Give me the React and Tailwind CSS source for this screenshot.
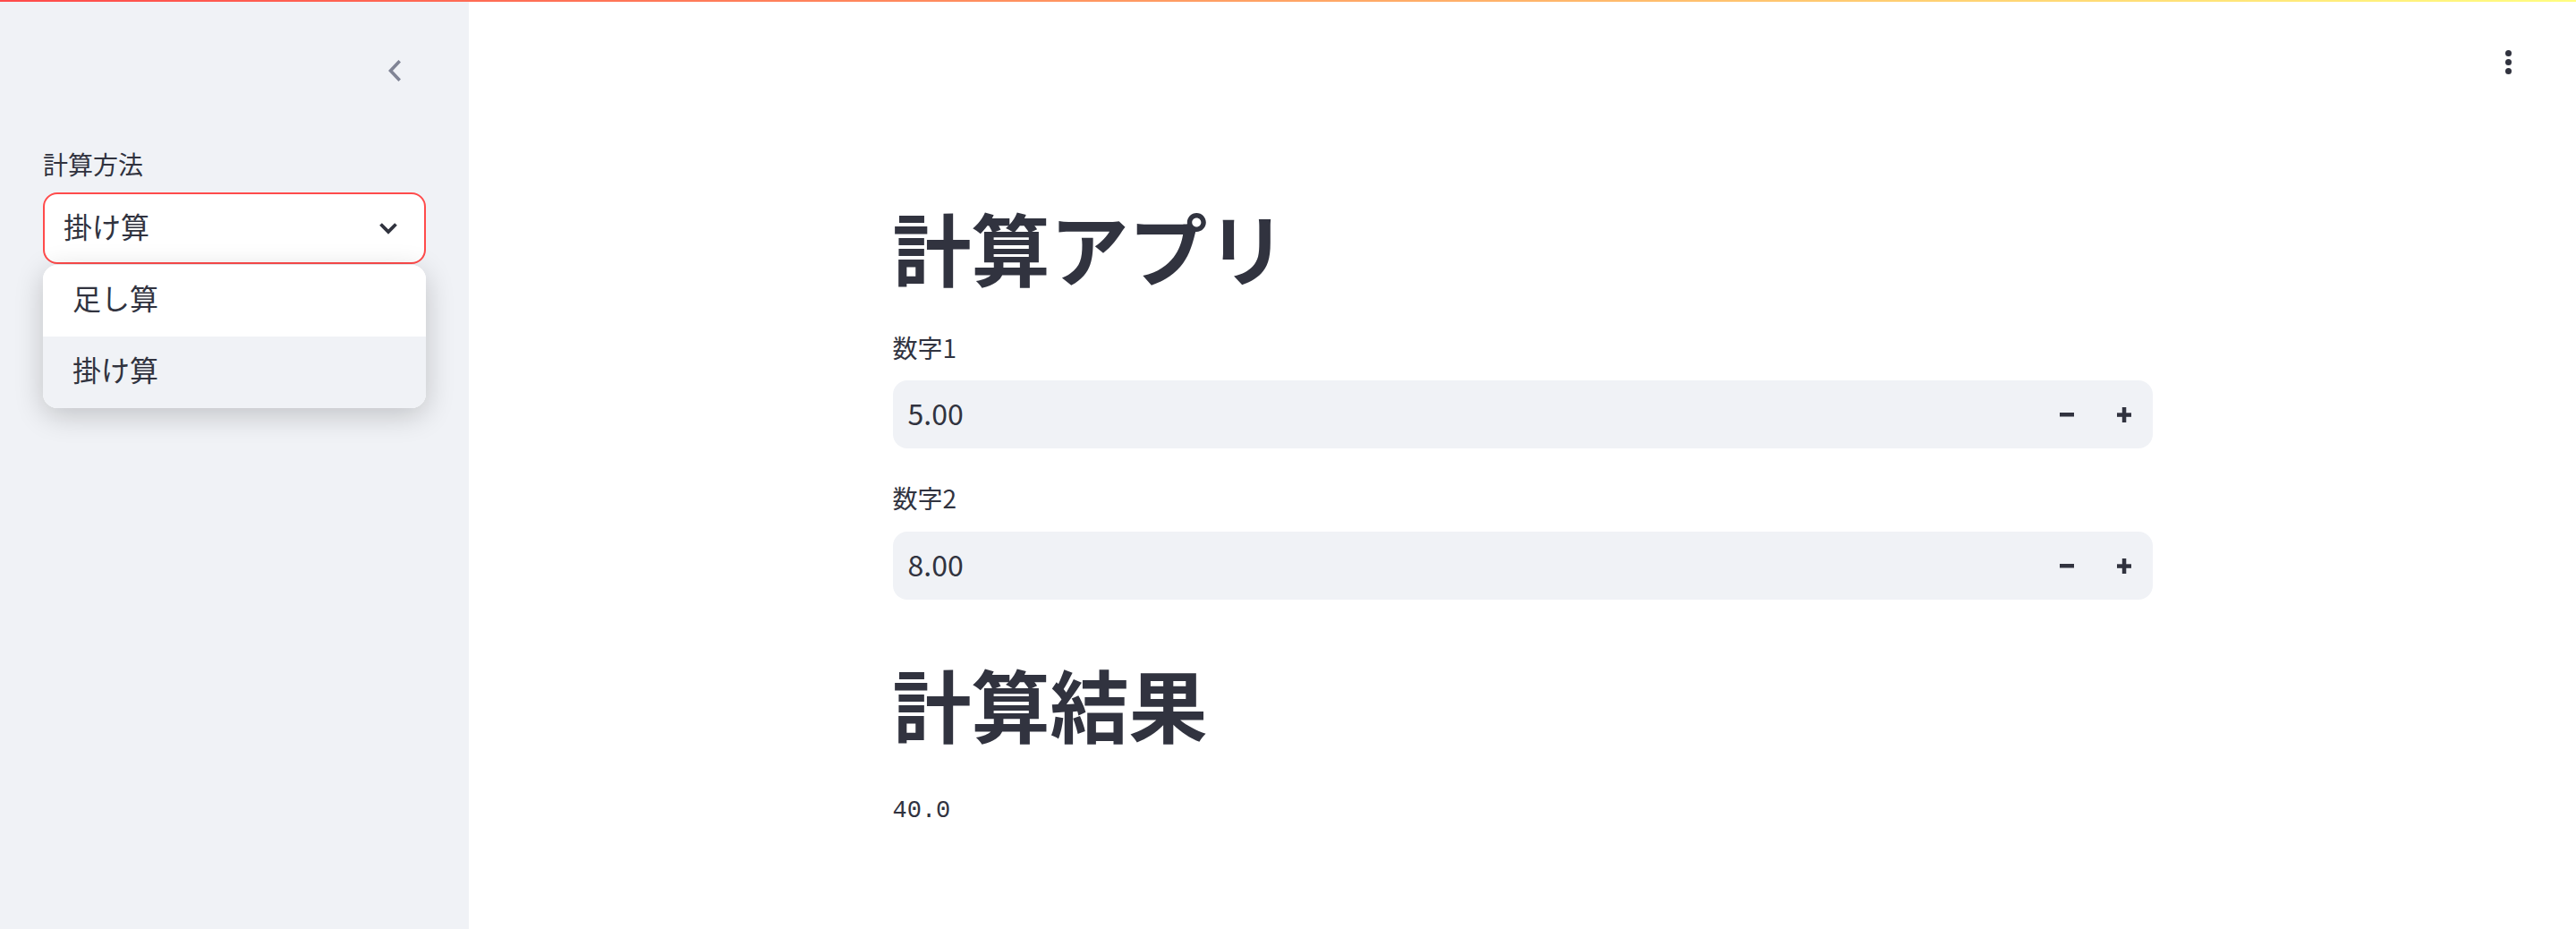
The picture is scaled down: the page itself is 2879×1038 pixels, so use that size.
import React from 'react';

const ChevronLeft = () => (
    <svg width="16" height="24" viewBox="0 0 16 24" fill="none">
        <path d="M13.5 2.5 L4.5 12 L13.5 21.5" stroke="#808495" strokeWidth="3.6" strokeLinecap="square" />
    </svg>
);

const ChevronDown = () => (
    <svg width="22" height="14" viewBox="0 0 22 14" fill="none">
        <path d="M2.5 2.5 L11 11 L19.5 2.5" stroke="#31333f" strokeWidth="3.8" />
    </svg>
);

const Minus = () => (
    <svg width="16" height="16" viewBox="0 0 16 16">
        <rect x="0" y="6" width="16" height="4.5" fill="#31333f" />
    </svg>
);

const Plus = () => (
    <svg width="16" height="17" viewBox="0 0 16 17">
        <rect x="0" y="6.3" width="16" height="4.5" fill="#31333f" />
        <rect x="5.8" y="0" width="4.5" height="17" fill="#31333f" />
    </svg>
);

const NumberInput = ({ label, value, top }) => (
    <div className={top}>
        <div className="text-[28px] leading-[44.8px]">{label}</div>
        <div className="mt-[15px] h-[76px] bg-[#f0f2f6] rounded-[16px] flex items-center">
            <div className="flex-1 pl-[17px] pb-[4px] text-[32px]">{value}</div>
            <button className="w-[64px] h-full flex items-center justify-center"><Minus /></button>
            <button className="w-[64px] h-full flex items-center justify-center"><Plus /></button>
        </div>
    </div>
);

export default function App() {
    const options = ['足し算', '掛け算'];

    return (
        <div className="relative h-screen flex text-[#31333f] font-['Noto_Sans_CJK_JP','Noto_Sans',sans-serif] overflow-hidden">
            {/* top decoration bar */}
            <div className="absolute top-0 left-0 right-0 h-[2px] z-20 bg-[linear-gradient(90deg,#ff4b4b,#fffd80)]"></div>

            {/* Sidebar */}
            <aside className="relative w-[524px] shrink-0 bg-[#f0f2f6] px-[48px]">
                <div className="flex justify-end pt-[67px] pr-[28px]">
                    <ChevronLeft />
                </div>
                <div className="mt-[70px] text-[28px] leading-[44.8px]">計算方法</div>
                <div className="mt-[9px] h-[80px] bg-white border-2 border-[#ff4b4b] rounded-[16px] flex items-center justify-between pl-[21px] pr-[29px] text-[32px]">
                    <span className="pb-[5px]">掛け算</span>
                    <ChevronDown />
                </div>

                {/* open dropdown menu */}
                <div className="absolute left-[48px] top-[296px] w-[428px] bg-white rounded-[16px] overflow-hidden shadow-[0_8px_32px_rgba(0,0,0,0.2)] z-10">
                    {options.map((opt, i) => (
                        <div
                            key={opt}
                            className={`h-[80px] flex items-center pl-[33px] pb-[8px] text-[32px] ${i === 1 ? 'bg-[#f0f2f6]' : 'bg-white'}`}
                        >
                            {opt}
                        </div>
                    ))}
                </div>
            </aside>

            {/* Main */}
            <main className="relative flex-1 bg-white">
                <div className="absolute top-[56px] right-[72px] flex flex-col gap-[3px] items-center">
                    <span className="w-[7px] h-[7px] rounded-full bg-[#31333f]"></span>
                    <span className="w-[7px] h-[7px] rounded-full bg-[#31333f]"></span>
                    <span className="w-[7px] h-[7px] rounded-full bg-[#31333f]"></span>
                </div>

                <div className="w-[1408px] mx-auto pt-[222px]">
                    <h1 className="text-[88px] font-bold leading-[1.2]">計算アプリ</h1>
                    <NumberInput label="数字1" value="5.00" top="mt-[38px]" />
                    <NumberInput label="数字2" value="8.00" top="mt-[33px]" />
                    <h2 className="mt-[62px] text-[88px] font-bold leading-[1.2]">計算結果</h2>
                    <div className="mt-[48px] font-['Liberation_Mono',monospace] text-[27px] leading-[40px]">40.0</div>
                </div>
            </main>
        </div>
    );
}
